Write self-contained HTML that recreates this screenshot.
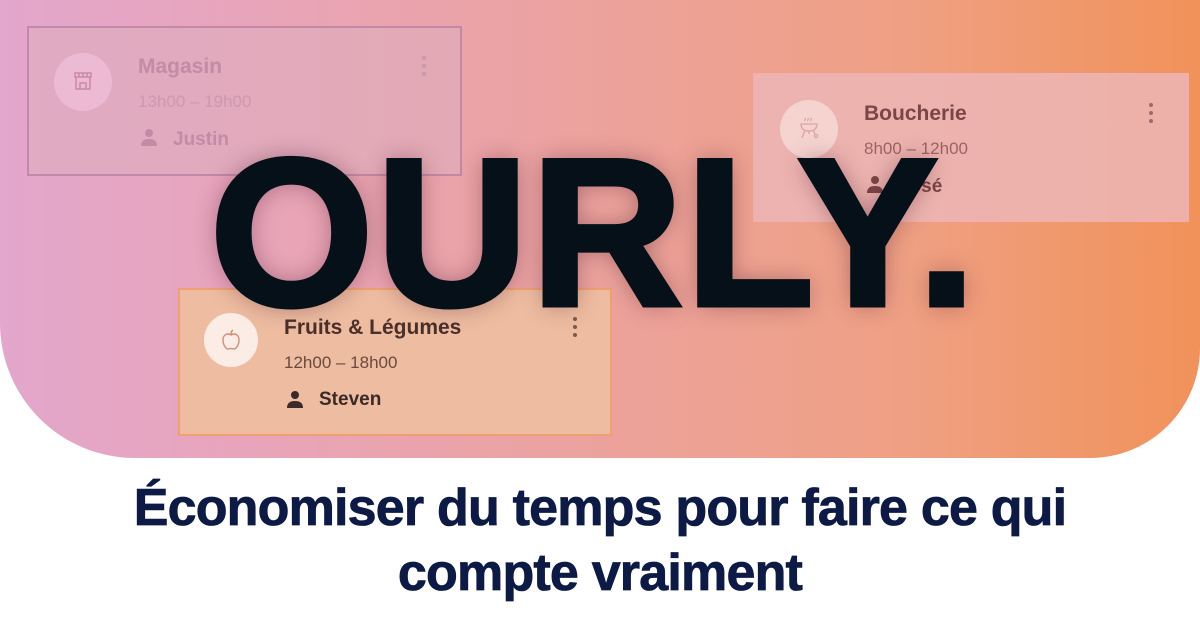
<!DOCTYPE html>
<html><head><meta charset="utf-8"><style>
*{margin:0;padding:0;box-sizing:border-box}
body{width:1200px;height:630px;background:#fff;overflow:hidden;position:relative;font-family:"Liberation Sans",sans-serif}
.hero{position:absolute;left:0;top:0;width:1200px;height:458px;background:linear-gradient(90deg,#e3a6cc 0%,#e9a4b6 25%,#eca29c 50%,#efa084 75%,#f1925a 100%);border-radius:0 0 110px 135px;overflow:hidden}
.card{position:absolute;border:2px solid;}
.ic{position:absolute;width:58px;height:58px;border-radius:50%;}
.t{position:absolute;font-weight:bold;font-size:21px}
.h{position:absolute;font-size:17px}
.p{position:absolute;font-weight:bold;font-size:19px}
.dots{position:absolute;width:4px}
.dots i{display:block;width:4px;height:4px;border-radius:50%;margin-bottom:4px}
.big{position:absolute;left:210px;top:103px;font-size:210px;font-weight:bold;color:#061018;letter-spacing:3px;line-height:260px;text-shadow:0 0 24px rgba(80,30,50,.45);-webkit-text-stroke:5px #061018}
.sub{position:absolute;left:0;width:1200px;top:476px;text-align:center;font-weight:bold;font-size:52px;line-height:65px;color:#0c1a45;letter-spacing:-0.8px;-webkit-text-stroke:0.8px #0c1a45}
</style></head><body>
<div class="hero">
 <div class="card" style="left:27px;top:26px;width:435px;height:150px;background:rgba(220,175,190,.55);border-color:rgba(170,110,150,.55)">
  <div class="ic" style="left:25px;top:25px;background:rgba(240,190,215,.8)"></div>
  <svg style="position:absolute;left:43px;top:42px" width="22" height="22" viewBox="0 0 22 22" fill="none" stroke="#c98aa8" stroke-width="1.5"><rect x="3" y="3" width="16" height="4"/><path d="M4 7v12h14V7M8 19v-6h6v6M7 3v4M11 3v4M15 3v4"/></svg>
  <div class="t" style="left:109px;top:27px;color:#c58aa5">Magasin</div>
  <div class="h" style="left:109px;top:64px;color:#cf98af">13h00 – 19h00</div>
  <svg style="position:absolute;left:111px;top:100px" width="18" height="18" viewBox="0 0 18 18" fill="#c58aa5"><circle cx="9" cy="5" r="4"/><path d="M1 18c0-5 3-7 8-7s8 2 8 7z"/></svg>
  <div class="p" style="left:144px;top:101px;color:#c58aa5">Justin</div>
  <div class="dots" style="left:393px;top:28px"><i style="background:#c898b0"></i><i style="background:#c898b0"></i><i style="background:#c898b0"></i></div>
 </div>
 <div class="card" style="left:753px;top:73px;width:436px;height:149px;background:rgba(236,182,182,.85);border-color:rgba(240,175,175,.8)">
  <div class="ic" style="left:25px;top:25px;background:rgba(245,215,212,.9)"></div>
  <svg style="position:absolute;left:43px;top:41px" width="22" height="24" viewBox="0 0 22 24" fill="none" stroke="#dba3a3" stroke-width="1.3"><path d="M7 2c1 1-1 2 0 3M10 2c1 1-1 2 0 3M13 2c1 1-1 2 0 3M3 8h16c0 5-3 7-8 7s-8-2-8-7zM7 14l-3 8M15 14l2 4M11 15v3"/><circle cx="18" cy="20" r="1.6"/></svg>
  <div class="t" style="left:109px;top:27px;color:#7a4646">Boucherie</div>
  <div class="h" style="left:109px;top:64px;color:#9b6464">8h00 – 12h00</div>
  <svg style="position:absolute;left:111px;top:100px" width="18" height="18" viewBox="0 0 18 18" fill="#7a4646"><circle cx="9" cy="5" r="4"/><path d="M1 18c0-5 3-7 8-7s8 2 8 7z"/></svg>
  <div class="p" style="left:144px;top:101px;color:#7a4646">José</div>
  <div class="dots" style="left:394px;top:28px"><i style="background:#9b6a6a"></i><i style="background:#9b6a6a"></i><i style="background:#9b6a6a"></i></div>
 </div>
 <div class="card" style="left:178px;top:288px;width:434px;height:148px;background:#eebca0;border-color:#f0a070">
  <div class="ic" style="left:24px;top:23px;width:54px;height:54px;background:#fbece6"></div>
  <svg style="position:absolute;left:40px;top:38px" width="22" height="24" viewBox="0 0 22 24" fill="none" stroke="#d09070" stroke-width="1.4"><path d="M11 7c-3-2-8-1-8 5 0 5 3 9 5 9 1 0 2-.5 3-.5s2 .5 3 .5c2 0 5-4 5-9 0-6-5-7-8-5zM11 7c0-2 0-4 2-5"/></svg>
  <div class="t" style="left:104px;top:26px;color:#4a2f2a">Fruits &amp; Légumes</div>
  <div class="h" style="left:104px;top:63px;color:#6a4a40">12h00 – 18h00</div>
  <svg style="position:absolute;left:106px;top:100px" width="18" height="18" viewBox="0 0 18 18" fill="#3a2a28"><circle cx="9" cy="5" r="4"/><path d="M1 18c0-5 3-7 8-7s8 2 8 7z"/></svg>
  <div class="p" style="left:139px;top:99px;color:#3a2a28">Steven</div>
  <div class="dots" style="left:393px;top:27px"><i style="background:#7a5a50"></i><i style="background:#7a5a50"></i><i style="background:#7a5a50"></i></div>
 </div>
 <div class="big">OURLY.</div>
</div>
<div class="sub">Économiser du temps pour faire ce qui<br>compte vraiment</div>
</body></html>
